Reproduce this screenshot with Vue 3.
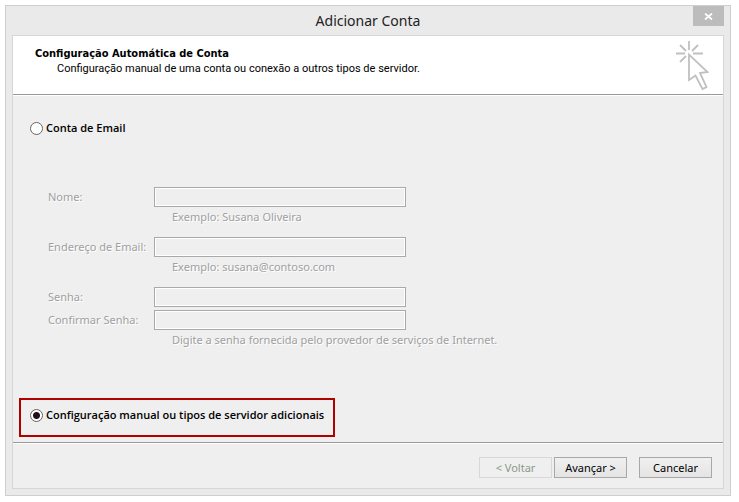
<script setup>
import { ref } from 'vue'

const mode = ref('manual')
const form = ref({ name: '', email: '', password: '', confirm: '' })

const fields = [
  { key: 'name', label: 'Nome:', type: 'text', hint: 'Exemplo: Susana Oliveira' },
  { key: 'email', label: 'Endereço de Email:', type: 'email', hint: 'Exemplo: susana@contoso.com' },
  { key: 'password', label: 'Senha:', type: 'password' },
  {
    key: 'confirm',
    label: 'Confirmar Senha:',
    type: 'password',
    hint: 'Digite a senha fornecida pelo provedor de serviços de Internet.',
  },
]
</script>

<template>
  <div class="window" role="dialog" aria-labelledby="window-title">
    <header class="titlebar">
      <h1 id="window-title" class="title">Adicionar Conta</h1>
      <button class="close" type="button" aria-label="Fechar">
        <svg width="9" height="7" viewBox="0 0 9 7" aria-hidden="true">
          <path d="M1 0.5 L8 6.5 M8 0.5 L1 6.5" fill="none" stroke="#fff" stroke-width="1.7" />
        </svg>
      </button>
    </header>

    <main class="panel">
      <section class="banner">
        <div>
          <h2 class="heading">Configuração Automática de Conta</h2>
          <p class="subheading">Configuração manual de uma conta ou conexão a outros tipos de servidor.</p>
        </div>
        <svg class="cursor" width="34" height="51" viewBox="0 0 34 51" aria-hidden="true">
          <g fill="none" stroke="#c0c0c0" stroke-width="1.8">
            <path d="M14 1 V10 M1 13.5 H10 M18 13.5 H28 M5 5 L11 11 M23 5 L17 11 M5 22 L11 16" />
            <path d="M14 14.5 V40 L20.5 35.5 L27.5 49 L31.5 47 L25 33 L32.5 32 Z" />
          </g>
        </svg>
      </section>

      <section class="body">
        <label class="choice">
          <input v-model="mode" type="radio" name="mode" value="auto" />
          <span>Conta de Email</span>
        </label>

        <div class="fields">
          <div v-for="f in fields" :key="f.key" class="field" :class="{ joined: !f.hint }">
            <label :for="f.key">{{ f.label }}</label>
            <input :id="f.key" v-model="form[f.key]" :type="f.type" :disabled="mode === 'manual'" />
            <p v-if="f.hint" class="hint">{{ f.hint }}</p>
          </div>
        </div>

        <label class="choice marked">
          <input v-model="mode" type="radio" name="mode" value="manual" />
          <span>Configuração manual ou tipos de servidor adicionais</span>
        </label>
      </section>

      <footer class="footer">
        <button type="button" disabled>&lt; Voltar</button>
        <button type="button">Avançar &gt;</button>
        <button class="cancel" type="button">Cancelar</button>
      </footer>
    </main>
  </div>
</template>

<style>
body {
  background: #fff;
}
</style>

<style scoped>
.window {
  margin: 5px 8px 5px 5px;
  padding: 0 6px 6px;
  border: 1px solid #cfcfcf;
  background: #eaeaea;
  color: #000;
  font: 11px/16px "Noto Sans", "Open Sans", sans-serif;
}

.titlebar {
  display: grid;
  grid-template-columns: 1fr auto 1fr;
  height: 29px;
}

.title {
  grid-column: 2;
  margin: 0;
  color: #222;
  font: 14px/29px "Noto Sans", sans-serif;
}

.close {
  display: flex;
  align-items: center;
  justify-content: center;
  justify-self: end;
  width: 31px;
  height: 20px;
  padding: 0;
  border: 0;
  background: #bcbcbc;
}

.panel {
  border: 1px solid #d6d6d6;
  background: #efefef;
}

.banner {
  display: flex;
  justify-content: space-between;
  height: 58px;
  padding: 0 14px 0 22px;
  border-bottom: 1px solid #999;
  background: #fff;
}

.heading {
  margin: 10px 0 0;
  font: bold 11px/16px "DejaVu Sans Condensed", sans-serif;
}

.subheading {
  margin: 0 0 0 22px;
  font: 11px/14px Roboto, sans-serif;
}

.cursor {
  margin-top: 4px;
}

.body {
  padding: 24px 6px 5px;
  border-top: 1px solid #fff;
}

.choice {
  display: flex;
  align-items: center;
  gap: 3px;
  width: fit-content;
  padding: 0 11px;
  font-family: "Open Sans", sans-serif;
  font-weight: 600;
}

.choice input {
  appearance: none;
  width: 13px;
  height: 13px;
  margin: 0;
  border: 1px solid #666;
  border-radius: 50%;
  background: #fff;
}

.choice input:checked {
  background: radial-gradient(circle, #201018 3px, #fff 4px);
}

.marked {
  padding: 7px 9px 12px;
  border: 2px solid #b00000;
}

.fields {
  padding: 51px 0 48px 29px;
  color: #a0a0a0;
  text-shadow: 1px 1px 0 #fff;
}

.field {
  display: grid;
  grid-template-columns: 106px minmax(0, 252px);
  align-items: center;
  margin-bottom: 10px;
}

.joined {
  margin-bottom: 3px;
}

.field:last-child {
  margin-bottom: 0;
}

.field input {
  box-sizing: border-box;
  width: 100%;
  height: 20px;
  padding: 0 4px;
  border: 1px solid #a9a9ad;
  border-radius: 0;
  background: #efefef;
  box-shadow: inset 0 0 0 1px #fff;
  font: inherit;
}

.hint {
  grid-column: 2;
  margin: 2px 0 2px 18px;
  white-space: nowrap;
}

.footer {
  display: flex;
  justify-content: flex-end;
  gap: 2px;
  padding: 14px 11px 10px;
  border-top: 1px solid #999;
  box-shadow: inset 0 1px 0 #fff;
}

.footer button {
  width: 73px;
  height: 21px;
  padding: 0;
  border: 1px solid #a8a8a8;
  border-radius: 0;
  background: linear-gradient(#f0f0f0, #e4e4e4);
  color: #000;
  font: inherit;
}

.footer button:disabled {
  border-color: #d8d8d8;
  background: #efefef;
  color: #8a9a8a;
}

.footer .cancel {
  margin-left: 10px;
}
</style>
